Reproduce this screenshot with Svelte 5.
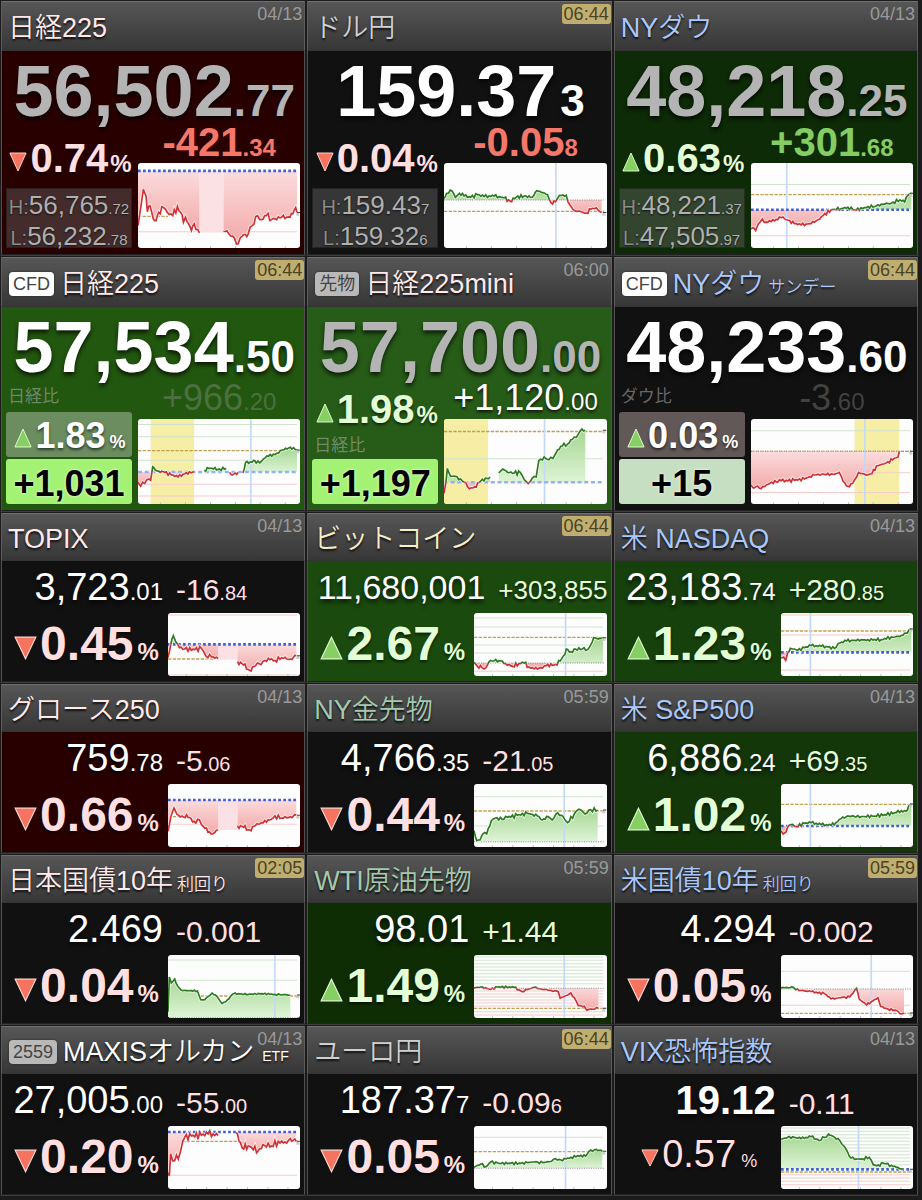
<script lang="ts">
type Tile = {
	name: string;
	sub?: string;
	badge?: string;
	badgeLive?: boolean;
	group: 'jp' | 'fx' | 'us' | 'crypto' | 'goods' | 'etf';
	time: string;
	live?: boolean;
	closed?: boolean;
	bg: string;
	price: [string, string];
	change: [string, string];
	changeStyle?: string;
	percent: string;
	up: boolean;
	percentStyle?: string;
	long?: boolean;
	boldPrice?: boolean;
	light?: boolean;
	high?: [string, string];
	low?: [string, string];
	versus?: string;
	diff?: string;
	weak?: boolean;
	chart: Chart;
};

type Chart = {
	base: number;
	dots?: boolean;
	pale?: boolean;
	avg?: number;
	avgTo?: number;
	cursor?: number;
	band?: [number, number];
	rest?: [number, number, number]; // lunch break: from, to, bottom
	green?: number[];
	red?: number[];
	noise?: number;
	lines: number[][];
};

const major: Tile[] = [
	{
		name: '日経225', group: 'jp', time: '04/13', closed: true, bg: '#280000',
		price: ['56,502', '.77'], change: ['-421', '.34'], changeStyle: 'down',
		percent: '0.74', up: false, high: ['56,765', '.72'], low: ['56,232', '.78'],
		chart: {
			base: 24, dots: true, avg: 162, avgTo: 90, red: [209], rest: [184, 256, 209], noise: 14,
			lines: [
				[0,190,6,150,16,80,24,100,28,148,36,130,46,170,54,175,62,150,76,135,88,150,104,160,118,132,128,150,136,180,142,165,160,205,168,185,184,212],
				[256,208,272,215,284,222,300,245,312,222,330,215,342,190,358,160,370,172,384,160,400,172,430,165,455,165,468,142,476,150]
			]
		}
	},
	{
		name: 'ドル円', group: 'fx', time: '06:44', live: true, bg: '#111111',
		price: ['159.37', '3'], change: ['-0.05', '8'], changeStyle: 'down',
		percent: '0.04', up: false, high: ['159.43', '7'], low: ['159.32', '6'],
		chart: {
			base: 112, avg: 147, cursor: 335, noise: 7,
			lines: [[0,108,8,92,24,85,34,104,46,92,60,100,80,104,100,96,120,102,150,100,180,106,198,116,216,104,240,100,264,104,278,84,296,90,310,96,320,120,334,118,346,98,366,98,376,126,390,144,410,148,426,152,440,140,456,136,472,150]]
		}
	},
	{
		name: 'NYダウ', group: 'us', time: '04/13', closed: true, bg: '#0c2b06',
		price: ['48,218', '.25'], change: ['+301', '.68'], changeStyle: 'up',
		percent: '0.63', up: true, high: ['48,221', '.37'], low: ['47,505', '.97'],
		chart: {
			base: 142, dots: true, avg: 96, cursor: 107, green: [65], red: [221], noise: 7,
			lines: [[0,200,6,196,14,205,22,185,34,170,40,180,60,178,90,166,106,172,130,184,150,188,180,184,200,172,216,160,240,142,270,138,290,134,310,142,334,138,350,132,370,132,390,125,420,122,446,112,460,118,470,98,480,92]]
		}
	},
	{
		name: '日経225', badge: 'CFD', badgeLive: true, group: 'jp', time: '06:44', live: true, bg: '#22570f',
		price: ['57,534', '.50'], change: ['+966', '.20'], changeStyle: 'faint', versus: '日経比',
		percent: '1.83', up: true, diff: '+1,031',
		chart: {
			base: 161, dots: true, pale: true, avg: 96, cursor: 338, band: [38, 168],
			green: [17, 54, 125], red: [198, 234], noise: 6,
			lines: [
				[0,192,8,204,14,192,20,196,32,182,38,186,44,145,52,155,62,158,80,162,100,170,120,176,140,166,168,160],
				[198,156,212,150,226,152,244,152,264,150],
				[274,162,282,170,300,162],
				[314,164,322,132,336,130,346,126,354,134,370,128,386,112,410,108,432,94,456,86,476,94]
			]
		}
	},
	{
		name: '日経225mini', badge: '先物', group: 'jp', time: '06:00', closed: true, bg: '#265c17',
		price: ['57,700', '.00'], change: ['+1,120', '.00'], changeStyle: 'plain', versus: '日経比',
		percent: '1.98', up: true, diff: '+1,197', percentStyle: 'open',
		chart: {
			base: 192, dots: true, pale: true, avg: 38, cursor: 301, band: [0, 132],
			green: [121], noise: 9,
			lines: [
				[0,226,6,190,10,150,20,174,34,174,44,184,60,192,76,212,92,206,110,188,138,176],
				[164,164,176,152,190,162,210,164,228,162,240,184,252,196,264,180,276,176,284,126,300,115,314,124,326,120,340,94,354,82,370,76,384,62,396,56,408,36,423,34]
			]
		}
	},
	{
		name: 'NYダウ', sub: 'サンデー', badge: 'CFD', badgeLive: true, group: 'us', time: '06:44', live: true, bg: '#111111',
		price: ['48,233', '.60'], change: ['-3', '.60'], changeStyle: 'faint', versus: 'ダウ比',
		percent: '0.03', up: true, diff: '+15', weak: true,
		chart: {
			base: 98, avg: 98, cursor: 341, band: [310, 444], green: [36], red: [163, 223], noise: 7,
			lines: [[0,200,8,210,14,206,30,212,46,200,62,192,90,188,130,186,160,182,190,170,220,168,250,168,264,162,276,190,290,204,304,196,316,176,322,162,334,166,350,170,362,166,376,142,400,136,424,124,440,116,444,98]]
		}
	}
];

const minor: Tile[] = [
	{
		name: 'TOPIX', group: 'jp', time: '04/13', bg: '#111111',
		price: ['3,723', '.01'], change: ['-16', '.84'], percent: '0.45', up: false,
		chart: {
			base: 94, dots: true, avg: 138, avgTo: 140, red: [6, 186], rest: [150, 208, 140], noise: 9,
			lines: [
				[0,134,8,96,16,68,24,88,34,104,50,108,80,110,100,106,114,130,130,132,150,137],
				[208,146,226,156,244,172,262,158,284,146,300,136,320,142,340,134,366,138,384,128]
			]
		}
	},
	{
		name: 'ビットコイン', group: 'crypto', time: '06:44', live: true, bg: '#1a4a0d', long: true,
		price: ['11,680,001', ''], change: ['+303,855', ''], percent: '2.67', up: true,
		chart: {
			base: 150, avg: 73, cursor: 274, green: [15, 42, 96, 120], red: [175], noise: 8,
			lines: [[0,148,10,160,24,164,36,164,44,148,60,144,80,144,94,152,116,160,134,152,150,150,164,162,180,168,200,164,216,158,244,154,258,144,268,128,276,108,290,116,304,108,324,108,340,110,350,94,358,74,372,78,386,74]]
		}
	},
	{
		name: '米 NASDAQ', group: 'us', time: '04/13', bg: '#16400c',
		price: ['23,183', '.74'], change: ['+280', '.85'], percent: '1.23', up: true,
		chart: {
			base: 118, dots: true, avg: 54, cursor: 88, red: [6, 66, 171], noise: 6,
			lines: [[0,134,8,132,14,142,20,120,28,106,40,108,50,112,70,104,90,98,120,100,140,102,160,106,176,90,196,84,220,82,260,80,300,80,330,72,356,70,374,60,382,52,390,48]]
		}
	},
	{
		name: 'グロース250', group: 'jp', time: '04/13', bg: '#280000',
		price: ['759', '.78'], change: ['-5', '.06'], percent: '0.66', up: false,
		chart: {
			base: 48, dots: true, avg: 98, avgTo: 60, red: [121], rest: [150, 208, 138], noise: 9,
			lines: [
				[0,142,8,100,18,72,26,90,42,96,60,100,78,112,94,108,106,128,124,144,134,150,150,138],
				[208,126,226,130,244,138,262,124,280,116,304,108,320,96,340,102,366,98,384,94]
			]
		}
	},
	{
		name: 'NY金先物', group: 'goods', time: '05:59', bg: '#111111',
		price: ['4,766', '.35'], change: ['-21', '.05'], percent: '0.44', up: false,
		chart: {
			base: 173, avg: 81, cursor: 270, green: [38, 126], noise: 8,
			lines: [[0,140,8,170,18,168,26,150,38,150,52,110,64,102,84,106,100,100,130,94,160,88,190,96,204,108,222,98,234,108,250,86,262,94,280,116,300,90,308,80,320,78,332,90,344,78,370,78]]
		}
	},
	{
		name: '米 S&P500', group: 'us', time: '04/13', bg: '#14370a',
		price: ['6,886', '.24'], change: ['+69', '.35'], percent: '1.02', up: true,
		chart: {
			base: 126, dots: true, avg: 61, cursor: 88, noise: 6,
			lines: [[0,140,6,150,14,146,20,130,30,122,46,128,70,118,90,116,120,122,150,124,164,116,180,104,200,96,240,98,280,96,310,92,340,86,360,80,374,82,382,66,390,60]]
		}
	},
	{
		name: '日本国債10年', sub: '利回り', group: 'jp', time: '02:05', live: true, bg: '#111111',
		price: ['2.469', ''], change: ['-0.001', ''], percent: '0.04', up: false,
		chart: {
			base: 188, avg: 123, cursor: 320, green: [15, 76], noise: 3,
			lines: [[0,170,4,66,10,84,20,72,28,92,40,106,88,108,98,134,110,134,132,114,146,124,162,146,178,134,196,116,240,118,280,116,320,118,366,120]]
		}
	},
	{
		name: 'WTI原油先物', group: 'goods', time: '05:59', bg: '#0e2d04',
		price: ['98.01', ''], change: ['+1.44', ''], percent: '1.49', up: true,
		chart: {
			base: 100, avg: 160, cursor: 270, green: [6,16,26,36,46,56,66,76,86], red: [108,117,126,135,144,153,170,180], noise: 4,
			lines: [[0,99,20,96,50,103,70,96,120,97,144,110,160,104,180,97,200,102,230,106,252,110,258,130,274,122,290,114,300,128,312,152,330,154,338,166,350,162,372,160]]
		}
	},
	{
		name: '米国債10年', sub: '利回り', group: 'us', time: '05:59', live: true, bg: '#111111',
		price: ['4.294', ''], change: ['-0.002', ''], percent: '0.05', up: false,
		chart: {
			base: 102, avg: 175, cursor: 270, green: [49], red: [151], noise: 4,
			lines: [[0,99,16,97,38,98,44,104,90,110,130,116,150,132,180,128,206,126,226,100,234,132,256,150,270,140,290,128,298,154,320,162,344,166,356,176,368,174]]
		}
	},
	{
		name: 'MAXISオルカン', sub: 'ETF', badge: '2559', group: 'etf', time: '04/13', bg: '#111111',
		price: ['27,005', '.00'], change: ['-55', '.00'], percent: '0.20', up: false,
		chart: {
			base: 18, dots: true, avg: 46, red: [148], noise: 14,
			lines: [
				[0,140,4,150,8,84,20,104,36,82,44,46,50,34,70,30,100,28,120,24,150,28],
				[204,20,212,44,222,66,240,60,270,74,284,56,310,60,330,46,350,48,366,38,384,46]
			]
		}
	},
	{
		name: 'ユーロ円', group: 'fx', time: '06:44', live: true, bg: '#111111',
		price: ['187.37', '7'], change: ['-0.09', '6'], percent: '0.05', up: false,
		chart: {
			base: 127, avg: 77, cursor: 274, green: [34], noise: 5,
			lines: [[0,124,20,114,36,122,50,108,76,112,110,112,140,112,160,110,180,108,206,110,232,106,244,98,260,102,290,94,320,88,334,90,344,76,366,70,384,76]]
		}
	},
	{
		name: 'VIX恐怖指数', group: 'us', time: '04/13', bg: '#111111', boldPrice: true, light: true,
		price: ['19.12', ''], change: ['-0.11', ''], percent: '0.57', up: false,
		chart: {
			base: 130, dots: true, avg: 138, cursor: 232,
			green: [6,16,26,36,46,56,66,76,86,96,106,116], red: [146,156,166,176], noise: 6,
			lines: [[0,40,20,34,40,34,60,38,90,32,114,44,130,34,142,24,160,34,176,44,188,60,196,72,204,90,220,100,244,98,264,94,276,116,296,120,304,110,330,118,350,124,366,130]]
		}
	}
];

// tick-like roughness between the key points, the same on every render
function trace(points: number[], noise: number): string {
	const out: string[] = [];
	for (let i = 0; i < points.length; i += 2) {
		const [x, y, nx, ny] = points.slice(i, i + 4);
		out.push(`${x},${y}`);
		if (nx === undefined) break;
		const steps = Math.max(1, Math.round((nx - x) / 5));
		for (let s = 1; s < steps; s++) {
			const t = s / steps;
			const px = x + (nx - x) * t;
			const wave = Math.sin(px * 1.9) * 0.6 + Math.sin(px * 0.83 + 2) * 0.4;
			out.push(`${px.toFixed(1)},${(y + (ny - y) * t + wave * noise * 0.8).toFixed(1)}`);
		}
	}
	return out.join(' ');
}

function area(points: number[], base: number, noise: number): string {
	return `${points[0]},${base} ${trace(points, noise)} ${points[points.length - 2]},${base}`;
}

function ticks(width: number): number[] {
	return Array.from({ length: 6 }, (_, i) => Math.round((i + 0.9) * width / 6.5));
}
</script>

{#snippet chart(c: Chart, w: number, h: number, id: string)}
	{@const last = c.lines[c.lines.length - 1]}
	{@const lastY = last[last.length - 1]}
	{@const noise = c.noise ?? 6}
	<svg class="chart" viewBox="0 0 {w} {h}" preserveAspectRatio="none" aria-hidden="true">
		<defs>
			<clipPath id="{id}-above"><rect width={w} height={c.base} /></clipPath>
			<clipPath id="{id}-below"><rect y={c.base} width={w} height={h - c.base} /></clipPath>
			<linearGradient id="{id}-green" x1="0" x2="0" y1="0" y2="1">
				<stop offset="0" stop-color="#a5d692" />
				<stop offset="1" stop-color="#dff4d7" />
			</linearGradient>
			<linearGradient id="{id}-red" x1="0" x2="0" y1="0" y2="1">
				<stop offset="0" stop-color="#fbdcdd" />
				<stop offset="1" stop-color="#f4a8a8" />
			</linearGradient>
		</defs>
		{#if c.band}
			<rect x={c.band[0]} width={c.band[1] - c.band[0]} height={h} fill="#f6eea5" />
		{/if}
		{#each c.green ?? [] as y}
			<line x1="0" x2={w - 10} y1={y} y2={y} stroke="#cfe3cd" stroke-width="3" />
		{/each}
		{#each c.red ?? [] as y}
			<line x1="0" x2={w - 10} y1={y} y2={y} stroke="#f6cccc" stroke-width="3" />
		{/each}
		{#each ticks(w) as x}
			<line x1={x} x2={x} y1={h - 5} y2={h} stroke="#bbbbbb" stroke-width="3" />
		{/each}
		{#if c.avg}
			<line x1="0" x2={c.avgTo ?? w - 6} y1={c.avg} y2={c.avg} stroke="#c1a14e" stroke-width="4" stroke-dasharray="10 4" />
		{/if}
		{#if c.rest}
			<rect x={c.rest[0]} y={c.base} width={c.rest[1] - c.rest[0]} height={c.rest[2] - c.base} fill="#fbe1e3" />
		{/if}
		{#each c.lines as points}
			<polygon points={area(points, c.base, noise)} fill="url(#{id}-green)" clip-path="url(#{id}-above)" />
			<polygon points={area(points, c.base, noise)} fill="url(#{id}-red)" clip-path="url(#{id}-below)" />
		{/each}
		{#if c.cursor}
			<line x1={c.cursor} x2={c.cursor} y1="0" y2={h} stroke="#c3d9f7" stroke-width="5" />
		{/if}
		{#if c.dots}
			<line x1="0" x2={w - 10} y1={c.base} y2={c.base} stroke={c.pale ? '#8db5f4' : '#3c5fd6'} stroke-width="8" stroke-dasharray={c.pale ? '12 8' : '8 7'} />
		{:else}
			<line x1="0" x2={w - 8} y1={c.base} y2={c.base} stroke="#888888" stroke-width="3" stroke-dasharray="3 4" />
		{/if}
		{#each c.lines as points}
			<polyline points={trace(points, noise)} fill="none" stroke="#ffffff" stroke-opacity="0.7" stroke-width="10" />
			<polyline points={trace(points, noise)} fill="none" stroke="#2f7a22" stroke-width="5" clip-path="url(#{id}-above)" />
			<polyline points={trace(points, noise)} fill="none" stroke="#cf3236" stroke-width="5" clip-path="url(#{id}-below)" />
		{/each}
		<rect x={w - 12} y={lastY} width="9" height="10" fill="#cccccc" />
		<line x1={w - 10} x2={w} y1={lastY} y2={lastY} stroke="#444444" stroke-width="3" />
	</svg>
{/snippet}

{#snippet header(tile: Tile)}
	<header class={tile.group}>
		{#if tile.badge}
			<span class="badge" class:active={tile.badgeLive}>{tile.badge}</span>
		{/if}
		<h2>{tile.name}{#if tile.sub}<small class:latin={tile.sub === 'ETF'}>{tile.sub}</small>{/if}</h2>
		<time class:live={tile.live}>{tile.time}</time>
	</header>
{/snippet}

{#snippet percent(tile: Tile)}
	<p class="percent" class:positive={tile.up} class:light={tile.light}>
		<svg class="arrow" viewBox="0 0 20 20" preserveAspectRatio="none" aria-hidden="true">
			{#if tile.up}
				<path d="M10 1 19 19H1Z" fill="#86cf62" stroke="#e3fbd2" />
			{:else}
				<path d="M10 19 1 1H19Z" fill="#f5735f" stroke="#ffd9d0" />
			{/if}
		</svg>
		<span>{tile.percent}</span><small>%</small>
	</p>
{/snippet}

<main>
	{#each major as tile, i}
		<article class="tile major">
			{@render header(tile)}
			<div class="body" style="background-color: {tile.bg}">
				<p class="price" class:closed={tile.closed}>
					{tile.price[0]}<small class:pip={!tile.price[1].startsWith('.')}>{tile.price[1]}</small>
				</p>
				<div class="columns">
					<div class="stats" class:open={tile.percentStyle === 'open'}>
						{#if tile.high && tile.low}
							{@render percent(tile)}
							<dl class="range">
								<div><dt>H:</dt><dd>{tile.high[0]}<small>{tile.high[1]}</small></dd></div>
								<div><dt>L:</dt><dd>{tile.low[0]}<small>{tile.low[1]}</small></dd></div>
							</dl>
						{:else if tile.percentStyle === 'open'}
							{@render percent(tile)}
							<p class="versus">{tile.versus}</p>
							<p class="diff">{tile.diff}</p>
						{:else}
							<p class="versus">{tile.versus}</p>
							<div class="panel" class:weak={tile.weak}>{@render percent(tile)}</div>
							<p class="diff" class:weak={tile.weak}>{tile.diff}</p>
						{/if}
					</div>
					<div class="trend">
						<p class="change {tile.changeStyle}">{tile.change[0]}<small>{tile.change[1]}</small></p>
						{@render chart(tile.chart, 486, 258, `major${i}`)}
					</div>
				</div>
			</div>
		</article>
	{/each}

	{#each minor as tile, i}
		<article class="tile minor">
			{@render header(tile)}
			<div class="body" style="background-color: {tile.bg}">
				<div class="quote" class:long={tile.long} class:positive={tile.up}>
					<p class="price" class:bold={tile.boldPrice}>{tile.price[0]}<small>{tile.price[1]}</small></p>
					<p class="change">{tile.change[0]}<small>{tile.change[1]}</small></p>
				</div>
				<div class="columns">
					{@render percent(tile)}
					{@render chart(tile.chart, 396, 189, `minor${i}`)}
				</div>
			</div>
		</article>
	{/each}
</main>

<style>
:global(body) {
	margin: 0;
	background-color: #1b1b1b;
}

main {
	display: grid;
	grid-template-columns: repeat(3, minmax(0, 1fr));
	padding: 0 3px 4px 0;
	font-family: "Liberation Sans", "Noto Sans CJK JP", sans-serif;
	color: #ffffff;
}

p, h2, dl, dd {
	margin: 0;
}

/* keeps the smaller decimals from growing their line */
small {
	line-height: 0;
}

.tile {
	display: flex;
	flex-direction: column;
	min-width: 0;
	border: 1px solid #1c1c1c;
	border-bottom-color: #3d3d3d;
	box-sizing: border-box;
}

.body {
	flex: 1;
	border: 1px solid #505050;
	border-top: 0;
	border-bottom-color: #222222;
}

header {
	position: relative;
	display: flex;
	align-items: center;
	height: 48px;
	box-sizing: border-box;
	padding: 3px 6px 0 6px;
	border: 1px solid #5c5c5c;
	border-top-color: #707070;
	border-bottom-color: #343434;
	background: linear-gradient(#565656, #373737);
}

.major header {
	height: 50px;
}

h2 {
	font-size: 27px;
	line-height: 44px;
	font-weight: 350;
	white-space: nowrap;
	text-shadow: 0 2px 2px #111111;
}

h2 small {
	font-size: 17px;
	margin-left: 4px;
}

h2 small.latin {
	font-size: 14px;
	margin-left: 8px;
}

.jp h2 { color: #ffe9ea; }
.fx h2 { color: #cfcfcf; }
.us h2 { color: #a9c8fb; }
.crypto h2 { color: #f7edc9; }
.goods h2 { color: #a3c9ae; }

.badge {
	margin: 0 6px 0 1px;
	padding: 0 4px;
	border-radius: 4px;
	background-color: #b9b9b9;
	color: #444444;
	font-size: 18px;
	line-height: 24px;
	white-space: nowrap;
	box-shadow: 0 0 2px #222222;
}

.badge.active {
	background-color: #ffffff;
}

time {
	position: absolute;
	top: 2px;
	right: 0;
	padding: 0 2px;
	border-radius: 3px;
	color: #999999;
	font-size: 18px;
	line-height: 20px;
}

time.live {
	background-color: #c0ae70;
	color: #4a4326;
}

.columns {
	display: flex;
}

.price {
	text-shadow: 0 3px 4px rgba(0, 0, 0, 0.7);
	white-space: nowrap;
}

.major .price {
	padding: 4px 0 1px 2px;
	font-size: 72px;
	line-height: 72px;
	font-weight: 700;
	text-align: center;
}

.major .price small {
	font-size: 44px;
}

.major .price small.pip {
	margin-left: 4px;
}

.price.closed {
	color: #b4b4b4;
}

.major .columns {
	gap: 6px;
	padding: 0 4px 6px 4px;
}

.stats {
	display: flex;
	flex-direction: column;
	justify-content: space-between;
	width: 126px;
	height: 120px;
}

.percent {
	display: flex;
	align-items: baseline;
	justify-content: center;
	color: #ffdfe0;
	font-size: 40px;
	line-height: 46px;
	font-weight: 700;
	text-shadow: 0 2px 3px rgba(0, 0, 0, 0.6);
}

.percent.positive {
	color: #e3ffd5;
}

.percent small {
	margin-left: 2px;
	font-size: 24px;
}

.arrow {
	flex: none;
	width: 18px;
	height: 20px;
	margin-right: 3px;
}

.stats > .percent {
	padding: 7px 0 0 3px;
}

.stats.open > .percent {
	padding-top: 2px;
}

.range {
	height: 60px;
	box-sizing: border-box;
	border: 1px solid rgba(0, 0, 0, 0.3);
	background-color: rgba(110, 110, 110, 0.4);
	color: #b0b0b0;
	font-size: 26px;
	line-height: 32px;
}

.range div {
	display: flex;
	justify-content: center;
	align-items: baseline;
	height: 31px;
	text-shadow: 0 1px 2px #111111;
}

.range dt {
	color: #8b8b8b;
	font-size: 20px;
	line-height: 24px;
}

.range small {
	font-size: 15px;
}

.versus {
	color: rgba(180, 180, 180, 0.55);
	font-size: 17px;
	line-height: 26px;
	padding-left: 2px;
}

.panel, .diff {
	height: 45px;
	border-radius: 3px;
}

.panel {
	background-color: #6b8d60;
}

.panel.weak {
	background-color: #635858;
}

.panel .percent {
	padding-left: 2px;
	color: #ffffff;
	font-size: 36px;
	line-height: 48px;
}

.panel .percent small {
	margin-left: 4px;
	font-size: 18px;
}

.diff {
	background-color: #a3f274;
	color: #000000;
	font-size: 36px;
	line-height: 50px;
	font-weight: 700;
	text-align: center;
	text-shadow: 0 0 3px #ffffff;
}

.diff.weak {
	background-color: #c6dfc2;
}

.trend {
	display: flex;
	flex: 1;
	flex-direction: column;
	gap: 7px;
	min-width: 0;
}

.major .change {
	font-size: 40px;
	line-height: 28px;
	font-weight: 700;
	text-align: center;
	white-space: nowrap;
}

.major .change small {
	font-size: 24px;
}

.major .change.down { color: #f5776a; }
.major .change.up { color: #85cc63; }

.major .change.plain, .major .change.faint {
	font-size: 36px;
	font-weight: 400;
}

.major .change.plain {
	text-shadow: 0 2px 3px #111111;
}

.major .change.faint {
	color: rgba(160, 160, 160, 0.35);
}

.chart {
	display: block;
	width: 100%;
	height: 85px;
	border-radius: 3px;
	background-color: #fdfdfd;
}

.quote {
	display: flex;
	align-items: baseline;
	gap: 13px;
	line-height: 52px;
	height: 52px;
	white-space: nowrap;
}

.minor .price {
	width: 161px;
	font-size: 38px;
	text-align: right;
}

.minor .price small {
	font-size: 24px;
}

.minor .price.bold {
	font-size: 40px;
	font-weight: 700;
}

.minor .change {
	color: #ffdfe0;
	font-size: 30px;
	text-shadow: 0 2px 3px #111111;
}

.minor .positive .change {
	color: #e3ffd5;
}

.minor .change small {
	font-size: 20px;
}

.minor .long .price {
	width: 177px;
	font-size: 34px;
}

.minor .long .change {
	font-size: 26px;
}

.minor .columns {
	padding: 0 4px 5px 3px;
}

.minor .percent {
	width: 163px;
	font-size: 48px;
	line-height: 62px;
}

.minor .percent small {
	margin-left: 4px;
}

.minor .arrow {
	width: 23px;
	height: 24px;
}

.minor .percent.light {
	font-size: 38px;
	line-height: 56px;
	font-weight: 400;
}

.minor .percent.light small {
	margin-left: 5px;
	font-size: 18px;
}

.minor .light .arrow {
	width: 18px;
	height: 18px;
}

.minor .chart {
	flex: 1;
	min-width: 0;
	height: 63px;
}
</style>
